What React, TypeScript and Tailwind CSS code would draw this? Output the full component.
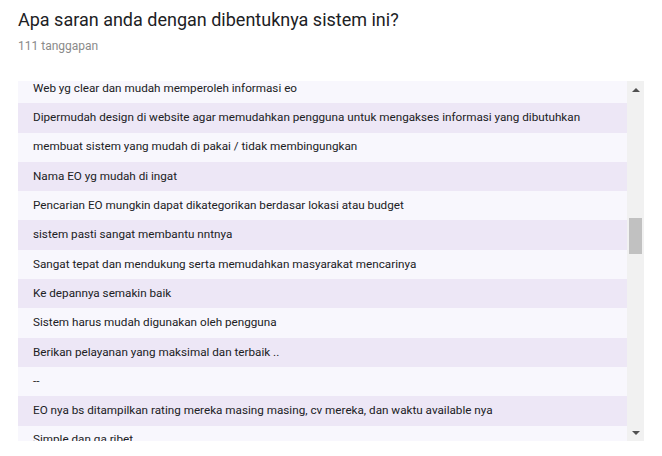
const responses = [
  'Web yg clear dan mudah memperoleh informasi eo',
  'Dipermudah design di website agar memudahkan pengguna untuk mengakses informasi yang dibutuhkan',
  'membuat sistem yang mudah di pakai / tidak membingungkan',
  'Nama EO yg mudah di ingat',
  'Pencarian EO mungkin dapat dikategorikan berdasar lokasi atau budget',
  'sistem pasti sangat membantu nntnya',
  'Sangat tepat dan mendukung serta memudahkan masyarakat mencarinya',
  'Ke depannya semakin baik',
  'Sistem harus mudah digunakan oleh pengguna',
  'Berikan pelayanan yang maksimal dan terbaik ..',
  '--',
  'EO nya bs ditampilkan rating mereka masing masing, cv mereka, dan waktu available nya',
  'Simple dan ga ribet',
];

const App = () => {
  return (
    <div className="w-[662px] h-[456px] bg-white overflow-hidden font-['Roboto',sans-serif] text-[#202124]">
      <div className="pl-[18px] pt-[7px]">
        <h2 className="text-[18px] leading-[26px]">Apa saran anda dengan dibentuknya sistem ini?</h2>
        <p className="text-[12px] leading-[16px] mt-[5px] text-[#8a8a8a]">111 tanggapan</p>
      </div>

      <div className="flex ml-[18px] mt-[27px] w-[626px] h-[360px]">
        <div className="flex-1 overflow-hidden">
          <div className="-mt-[7px]">
            {responses.map((r, i) => (
              <div
                key={i}
                className={
                  'h-[29.3px] flex items-center pl-[15px] text-[11.7px] whitespace-nowrap ' +
                  (i % 2 === 0 ? 'bg-[#f8f7fd]' : 'bg-[#ede7f6]')
                }
              >
                {r}
              </div>
            ))}
          </div>
        </div>

        <div className="w-[17px] bg-[#f1f1f1] flex flex-col items-center">
          <div className="h-[17px] flex items-center justify-center">
            <svg width="8" height="4" viewBox="0 0 8 4">
              <path d="M0 4 L4 0 L8 4 Z" fill="#505050" />
            </svg>
          </div>
          <div className="flex-1 w-full px-[2px]">
            <div className="mt-[120px] h-[36px] bg-[#c1c1c1]" />
          </div>
          <div className="h-[17px] flex items-center justify-center">
            <svg width="8" height="4" viewBox="0 0 8 4">
              <path d="M0 0 L8 0 L4 4 Z" fill="#505050" />
            </svg>
          </div>
        </div>
      </div>
    </div>
  );
};

export default App;
